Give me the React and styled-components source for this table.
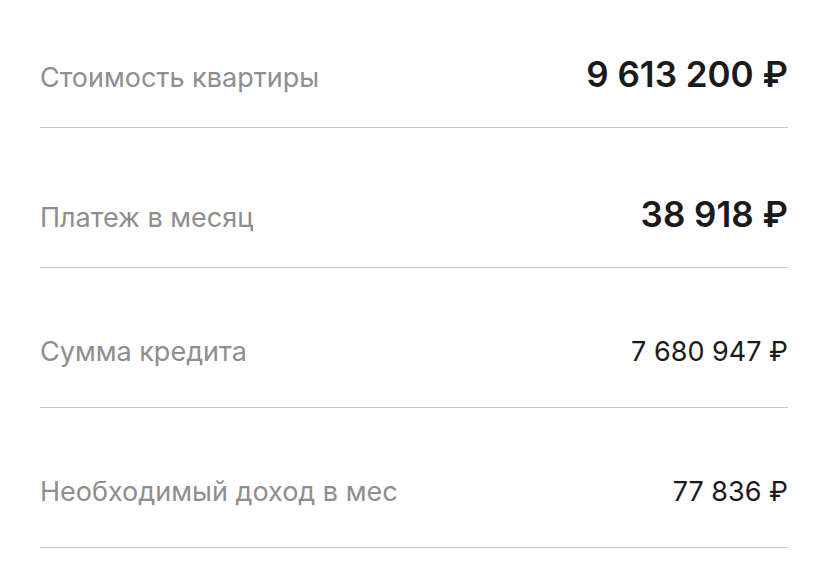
import React from "react";
import styled, { createGlobalStyle } from "styled-components";

const Global = createGlobalStyle`
  html, body { margin: 0; padding: 0; background: #ffffff; }
  body { font-family: Inter, "Noto Sans", Roboto, sans-serif; -webkit-font-smoothing: antialiased; }
  * { box-sizing: border-box; }
`;

const List = styled.div`
  display: flex;
  flex-direction: column;
  padding: 0 40px;
`;

const Row = styled.div`
  display: flex;
  align-items: baseline;
  justify-content: space-between;
  height: 140px;
  padding-top: ${(p) => (p.$big ? "65px" : "67px")};
  border-bottom: 1px solid #c8c8c8;
  &:first-child {
    height: 128px;
    padding-top: 53px;
  }
`;

const Label = styled.span`
  font-size: 27px;
  line-height: normal;
  color: #8e8e8e;
`;

const Value = styled.span`
  font-size: ${(p) => (p.$big ? "35px" : "27px")};
  font-weight: ${(p) => (p.$big ? 600 : 400)};
  line-height: normal;
  color: #1a1a1a;
  white-space: nowrap;
`;

const rows = [
  { label: "Стоимость квартиры", value: "9 613 200 ₽", big: true },
  { label: "Платеж в месяц", value: "38 918 ₽", big: true },
  { label: "Сумма кредита", value: "7 680 947 ₽", big: false },
  { label: "Необходимый доход в мес", value: "77 836 ₽", big: false },
];

export default function App() {
  return (
    <>
      <Global />
      <List>
        {rows.map((r) => (
          <Row key={r.label} $big={r.big}>
            <Label>{r.label}</Label>
            <Value $big={r.big}>{r.value}</Value>
          </Row>
        ))}
      </List>
    </>
  );
}
